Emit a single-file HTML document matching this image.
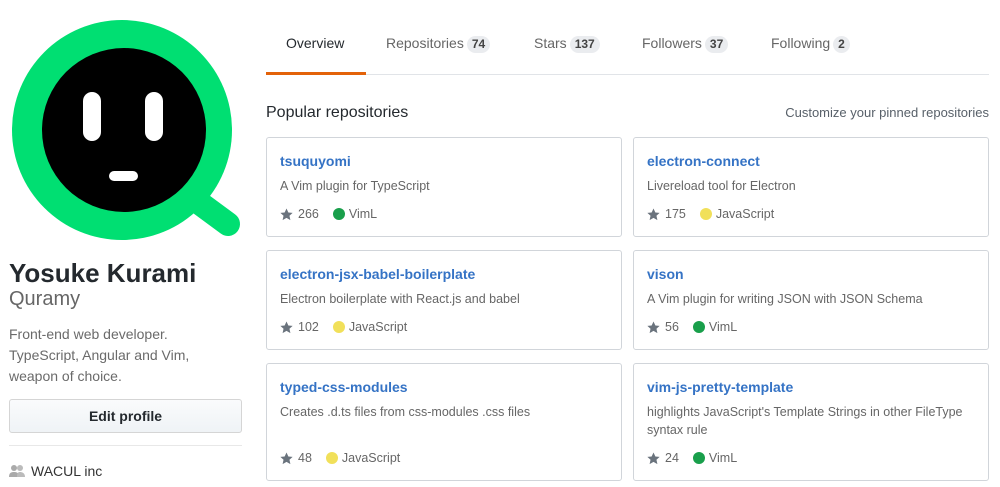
<!DOCTYPE html>
<html><head><meta charset="utf-8"><style>
*{box-sizing:border-box;margin:0;padding:0}
body{width:1000px;height:487px;overflow:hidden;background:#fff;font-family:"Liberation Sans",Arial,sans-serif;color:#24292e;position:relative}
.abs{position:absolute}
.name{left:9px;top:258px;font-size:26px;font-weight:bold;color:#24292e;white-space:nowrap}
.login{left:9px;top:288px;font-size:20px;color:#666;font-weight:300}
.bio{left:9px;top:324px;font-size:14px;color:#6a6a6a;line-height:21px}
.btn{left:9px;top:399px;width:233px;height:34px;border:1px solid #d5d5d5;border-radius:3px;background:linear-gradient(#fafbfc,#eff3f6);font-size:14px;font-weight:bold;text-align:center;line-height:32px;color:#24292e}
.hr{left:9px;top:445px;width:233px;height:1px;background:#e8e8e8}
.org{left:9px;top:463px;font-size:14px;color:#333}
.tabs{left:266px;top:0;width:723px;height:75px;border-bottom:1px solid #e1e4e8}
.tab{position:absolute;top:35px;font-size:14px;color:#666}
.tab.on{color:#24292e}
.cnt{display:inline-block;background:#eaecef;border-radius:10px;font-size:12px;font-weight:bold;color:#444;padding:2px 5px;line-height:13px;margin-left:3px}
.uline{left:266px;top:72px;width:100px;height:3px;background:#e36209}
.h{left:266px;top:104px;font-size:16px;color:#24292e}
.cust{right:11px;top:105px;font-size:13px;color:#586069}
.card{position:absolute;border:1px solid #d1d5da;border-radius:3px;width:356px}
.card .t{position:absolute;left:13px;top:15px;font-size:14px;font-weight:bold;color:#3573c5}
.card .d{position:absolute;left:13px;top:39px;font-size:12.5px;color:#666;line-height:18px;width:330px}
.card .m{position:absolute;left:13px;font-size:12.5px;color:#666;display:flex;align-items:center}
.dot{display:inline-block;width:12px;height:12px;border-radius:50%;margin:0 4px 0 14px}
svg.st{margin-right:5px}
</style></head><body>
<svg class="abs" style="left:0;top:0" width="260" height="250">
<line x1="190" y1="196" x2="228" y2="224" stroke="#00df72" stroke-width="24" stroke-linecap="round"/>
<circle cx="122" cy="130" r="110" fill="#00df72"/>
<circle cx="124" cy="130" r="82" fill="#000"/>
<rect x="83" y="92" width="18" height="49" rx="9" fill="#fff"/>
<rect x="145" y="92" width="18" height="49" rx="9" fill="#fff"/>
<rect x="109" y="171" width="29" height="10" rx="5" fill="#fff"/>
</svg>
<div class="abs name">Yosuke Kurami</div>
<div class="abs login">Quramy</div>
<div class="abs bio">Front-end web developer.<br>TypeScript, Angular and Vim,<br>weapon of choice.</div>
<div class="abs btn">Edit profile</div>
<div class="abs hr"></div>
<svg class="abs" style="left:9px;top:464px" width="16" height="14" viewBox="0 0 16 14"><circle cx="5" cy="4" r="3" fill="#aaa"/><path d="M0 13c0-4 2-5 5-5s5 1 5 5z" fill="#aaa"/><circle cx="11" cy="4" r="3" fill="#bbb"/><path d="M8 13c0-4 1-5 3-5s5 1 5 5z" fill="#bbb"/></svg>
<div class="abs org" style="left:31px">WACUL inc</div>

<div class="abs tabs">
<div class="tab on" style="left:20px">Overview</div>
<div class="tab" style="left:120px">Repositories<span class="cnt">74</span></div>
<div class="tab" style="left:268px">Stars<span class="cnt">137</span></div>
<div class="tab" style="left:376px">Followers<span class="cnt">37</span></div>
<div class="tab" style="left:505px">Following<span class="cnt">2</span></div>
</div>
<div class="abs uline"></div>
<div class="abs h">Popular repositories</div>
<div class="abs cust">Customize your pinned repositories</div>

<div class="card" style="left:266px;top:137px;height:100px"><div class="t">tsuquyomi</div><div class="d">A Vim plugin for TypeScript</div><div class="m" style="top:69px"><svg class="st" width="13" height="13" viewBox="0 0 14 14"><path d="M7 0.5l2 4.3 4.6.5-3.4 3.1 1 4.6L7 10.6 2.8 13l1-4.6L.4 5.3 5 4.8z" fill="#6a737d"/></svg>266<span class="dot" style="background:#199f4b"></span>VimL</div></div>
<div class="card" style="left:633px;top:137px;height:100px"><div class="t">electron-connect</div><div class="d">Livereload tool for Electron</div><div class="m" style="top:69px"><svg class="st" width="13" height="13" viewBox="0 0 14 14"><path d="M7 0.5l2 4.3 4.6.5-3.4 3.1 1 4.6L7 10.6 2.8 13l1-4.6L.4 5.3 5 4.8z" fill="#6a737d"/></svg>175<span class="dot" style="background:#f1e05a"></span>JavaScript</div></div>
<div class="card" style="left:266px;top:250px;height:100px"><div class="t">electron-jsx-babel-boilerplate</div><div class="d">Electron boilerplate with React.js and babel</div><div class="m" style="top:69px"><svg class="st" width="13" height="13" viewBox="0 0 14 14"><path d="M7 0.5l2 4.3 4.6.5-3.4 3.1 1 4.6L7 10.6 2.8 13l1-4.6L.4 5.3 5 4.8z" fill="#6a737d"/></svg>102<span class="dot" style="background:#f1e05a"></span>JavaScript</div></div>
<div class="card" style="left:633px;top:250px;height:100px"><div class="t">vison</div><div class="d">A Vim plugin for writing JSON with JSON Schema</div><div class="m" style="top:69px"><svg class="st" width="13" height="13" viewBox="0 0 14 14"><path d="M7 0.5l2 4.3 4.6.5-3.4 3.1 1 4.6L7 10.6 2.8 13l1-4.6L.4 5.3 5 4.8z" fill="#6a737d"/></svg>56<span class="dot" style="background:#199f4b"></span>VimL</div></div>
<div class="card" style="left:266px;top:363px;height:118px"><div class="t">typed-css-modules</div><div class="d">Creates .d.ts files from css-modules .css files</div><div class="m" style="top:87px"><svg class="st" width="13" height="13" viewBox="0 0 14 14"><path d="M7 0.5l2 4.3 4.6.5-3.4 3.1 1 4.6L7 10.6 2.8 13l1-4.6L.4 5.3 5 4.8z" fill="#6a737d"/></svg>48<span class="dot" style="background:#f1e05a"></span>JavaScript</div></div>
<div class="card" style="left:633px;top:363px;height:118px"><div class="t">vim-js-pretty-template</div><div class="d">highlights JavaScript's Template Strings in other FileType syntax rule</div><div class="m" style="top:87px"><svg class="st" width="13" height="13" viewBox="0 0 14 14"><path d="M7 0.5l2 4.3 4.6.5-3.4 3.1 1 4.6L7 10.6 2.8 13l1-4.6L.4 5.3 5 4.8z" fill="#6a737d"/></svg>24<span class="dot" style="background:#199f4b"></span>VimL</div></div>
</body></html>
